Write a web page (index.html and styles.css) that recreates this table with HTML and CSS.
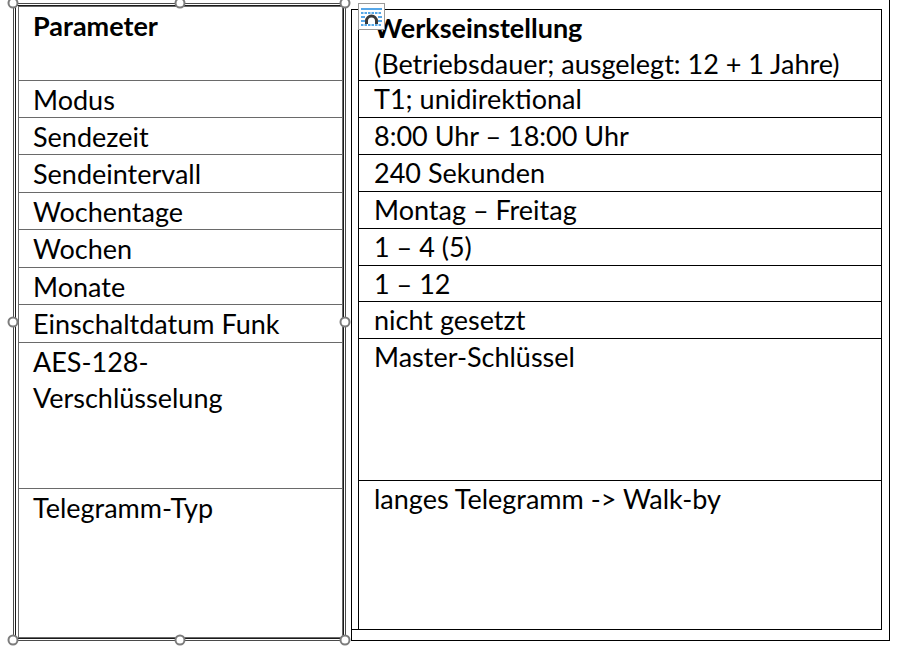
FILE: index.html
```html
<!DOCTYPE html>
<html lang="de">
<head>
<meta charset="utf-8">
<title>Parameter</title>
<link rel="stylesheet" href="styles.css">
</head>
<body>
<div class="page">
  <div class="tb">
    <div class="tbline">
      <div class="ltab">
        <div class="lcell h74 head">Parameter</div>
        <div class="lcell h37">Modus</div>
        <div class="lcell h37">Sendezeit</div>
        <div class="lcell h38">Sendeintervall</div>
        <div class="lcell h37">Wochentage</div>
        <div class="lcell h38">Wochen</div>
        <div class="lcell h37">Monate</div>
        <div class="lcell h38">Einschaltdatum Funk</div>
        <div class="lcell h146">AES-128-<br>Verschlüsselung</div>
        <div class="lcell last">Telegramm-Typ</div>
      </div>
    </div>
    <span class="hd hx0 hy0"></span>
    <span class="hd hx1 hy0"></span>
    <span class="hd hx2 hy0"></span>
    <span class="hd hx0 hy1"></span>
    <span class="hd hx2 hy1"></span>
    <span class="hd hx0 hy2"></span>
    <span class="hd hx1 hy2"></span>
    <span class="hd hx2 hy2"></span>
  </div>
  <div class="rt">
    <div class="rin">
      <div class="rtab">
        <div class="rtable">
          <div class="rcell h71"><span class="head">Werkseinstellung</span><br>(Betriebsdauer; ausgelegt: 12 + 1 Jahre)</div>
          <div class="rcell h37">T1; unidirektional</div>
          <div class="rcell h37">8:00 Uhr – 18:00 Uhr</div>
          <div class="rcell h37">240 Sekunden</div>
          <div class="rcell h37">Montag – Freitag</div>
          <div class="rcell h37">1 – 4 (5)</div>
          <div class="rcell h36">1 – 12</div>
          <div class="rcell h37">nicht gesetzt</div>
          <div class="rcell h142">Master-Schlüssel</div>
          <div class="rcell last">langes Telegramm -&gt; Walk-by</div>
        </div>
      </div>
    </div>
    <svg class="anchor" viewBox="0 0 27 27" width="27" height="27">
      <rect x="0.5" y="0.5" width="26" height="26" fill="#ffffff" stroke="#999999"/>
      <line x1="3" y1="6" x2="24" y2="6" stroke="#1f8ae0" stroke-width="1.5"/>
      <line x1="3" y1="10" x2="24" y2="10" stroke="#1f8ae0" stroke-width="1.5" stroke-dasharray="2.5 1"/>
      <line x1="3" y1="14" x2="7" y2="14" stroke="#1f8ae0" stroke-width="1.5"/>
      <line x1="20" y1="14" x2="24" y2="14" stroke="#1f8ae0" stroke-width="1.5"/>
      <line x1="3" y1="18" x2="7" y2="18" stroke="#1f8ae0" stroke-width="1.5"/>
      <line x1="20" y1="18" x2="24" y2="18" stroke="#1f8ae0" stroke-width="1.5"/>
      <line x1="3" y1="22" x2="24" y2="22" stroke="#1f8ae0" stroke-width="1.5" stroke-dasharray="2.5 1"/>
      <path d="M8.5 21 V18 A5 5 0 0 1 18.5 18 V21" fill="none" stroke="#3a3a3a" stroke-width="3"/>
    </svg>
  </div>
</div>
</body>
</html>
```
FILE: styles.css
```css
html, body {
  margin: 0;
  padding: 0;
  background: #ffffff;
}

body {
  font-family: Lato, "Open Sans", sans-serif;
  font-size: 27px;
  line-height: 36px;
  color: #000000;
}

.page {
  display: flex;
  align-items: flex-start;
  padding-left: 13px;
  width: 909px;
  height: 650px;
  box-sizing: border-box;
  overflow: hidden;
}

/* left: selected text box holding a table */
.tb {
  position: relative;
  margin-top: 3px;
  width: 333px;
  height: 638px;
  box-sizing: border-box;
  border: 1px solid #4a4a4a;
  padding: 1px;
}

.tbline {
  height: 100%;
  box-sizing: border-box;
  border: 1px solid #1a1a1a;
  padding: 0 0 0 2px;
}

.ltab {
  height: 100%;
  box-sizing: border-box;
  border: 1px solid #6a6a6a;
  display: flex;
  flex-direction: column;
}

.lcell {
  box-sizing: border-box;
  border-bottom: 1px solid #6a6a6a;
  padding-left: 14px;
  padding-top: 1px;
  flex: none;
  white-space: nowrap;
}

.lcell.last {
  border-bottom: none;
  flex: 1;
}

.head {
  font-weight: 700;
}

.h36 { height: 36px; }
.h37 { height: 37px; }
.h38 { height: 38px; }
.h71 { height: 71px; }
.h74 { height: 74px; }
.h142 { height: 142px; }
.h146 { height: 146px; }

.hd {
  position: absolute;
  width: 11px;
  height: 11px;
  box-sizing: border-box;
  border: 2px solid #7c7c7c;
  border-radius: 50%;
  background: #ffffff;
  transform: translate(-50%, -50%);
}

.hx0 { left: -1px; }
.hx1 { left: 50%; }
.hx2 { left: 100%; }
.hy0 { top: -1px; }
.hy1 { top: 50%; }
.hy2 { top: 100%; }

/* right: framed table */
.rt {
  position: relative;
  margin-left: 5px;
  width: 539px;
  height: 641px;
  box-sizing: border-box;
  border-right: 1px solid #000000;
  border-bottom: 1px solid #000000;
  padding-top: 9px;
  display: flex;
  flex-direction: column;
}

.rin {
  flex: 1;
  border-left: 1px solid #000000;
  padding-right: 7px;
  padding-bottom: 10px;
  display: flex;
  flex-direction: column;
}

.rtab {
  flex: 1;
  border-top: 1px solid #000000;
  border-bottom: 1px solid #000000;
  padding-left: 6px;
  display: flex;
  flex-direction: column;
}

.rtable {
  flex: 1;
  border-left: 1px solid #000000;
  border-right: 1px solid #000000;
  display: flex;
  flex-direction: column;
}

.rcell {
  box-sizing: border-box;
  border-bottom: 1px solid #000000;
  padding-left: 15px;
  flex: none;
  white-space: nowrap;
}

.rcell.last {
  border-bottom: none;
  flex: 1;
}

.anchor {
  position: absolute;
  left: 7px;
  top: 3px;
  width: 27px;
  height: 27px;
  display: block;
}
```
